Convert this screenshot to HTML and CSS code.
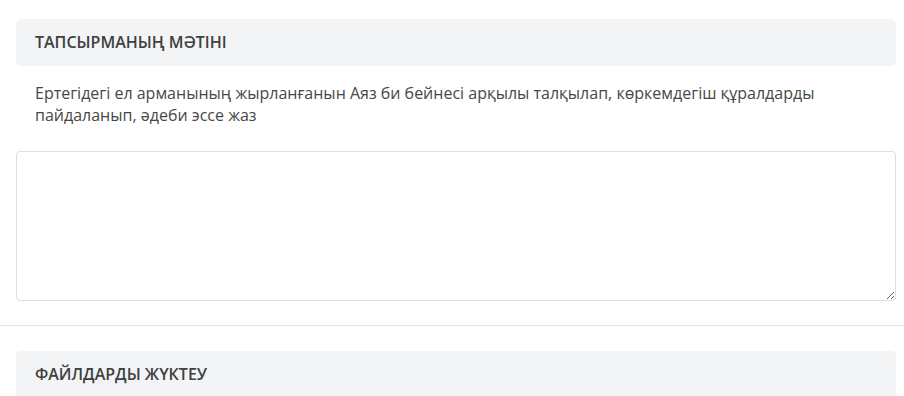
FILE: index.html
```html
<!DOCTYPE html>
<html lang="kk">
<head>
    <meta charset="UTF-8">
    <meta name="viewport" content="width=device-width, initial-scale=1.0">
    <title>Тапсырма</title>
    <link rel="stylesheet" href="styles.css">
</head>
<body>
    <div class="section">
        <div class="section-head">Тапсырманың мәтіні</div>
        <p class="task-text">Ертегідегі ел арманының жырланғанын Аяз би бейнесі арқылы талқылап, көркемдегіш құралдарды пайдаланып, әдеби эссе жаз</p>
        <textarea class="answer" name="answer"></textarea>
    </div>
    <hr class="divider">
    <div class="section">
        <div class="section-head">Файлдарды жүктеу</div>
    </div>
</body>
</html>
```

FILE: styles.css
```css
body {
    font-family: "Open Sans", sans-serif;
    background-color: #fff;
    color: #444;
    margin: 0;
}

.section {
    padding: 19px 8px 0 16px;
}

.section-head {
    background: #f3f4f6;
    border-radius: 5px;
    padding: 0 19px;
    height: 47px;
    line-height: 47px;
    font-size: 16px;
    font-weight: 600;
    text-transform: uppercase;
    color: #404040;
}

.task-text {
    margin: 16px 0 0;
    padding: 0 19px;
    font-size: 16px;
    line-height: 22px;
    color: #474747;
}

.answer {
    display: block;
    box-sizing: border-box;
    width: 100%;
    height: 150px;
    margin-top: 25px;
    border: 1px solid #dedede;
    border-radius: 4px;
    resize: vertical;
}

.divider {
    border: none;
    border-top: 1px solid #e4e4e4;
    margin: 24px 0 6px;
}
```
